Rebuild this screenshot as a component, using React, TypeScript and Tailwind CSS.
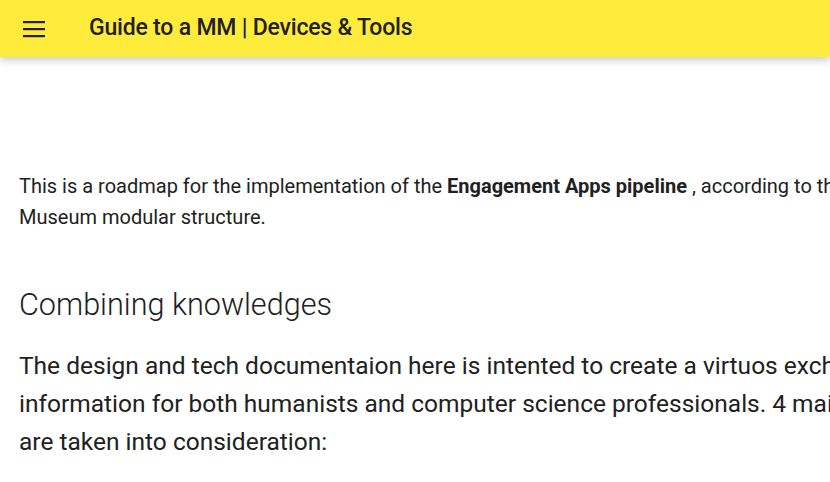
import React from "react";

function MenuIcon() {
  return (
    <svg width="24" height="18" viewBox="0 0 24 18" className="text-[#212121]">
      <rect x="1" y="1" width="22" height="2.2" fill="currentColor" />
      <rect x="1" y="8" width="22" height="2.2" fill="currentColor" />
      <rect x="1" y="15" width="22" height="2.2" fill="currentColor" />
    </svg>
  );
}

export default function App() {
  return (
    <div className="w-[830px] h-[482px] overflow-hidden bg-white font-['Roboto',sans-serif] text-[#212121]">
      {/* top bar */}
      <header className="relative z-10 h-[57px] bg-[#ffeb3b] flex items-center shadow-[0_3px_8px_rgba(0,0,0,0.22)]">
        <button className="ml-[22px] w-[24px] flex items-center justify-center">
          <MenuIcon />
        </button>
        <h1 className="ml-[43px] -mt-[1px] text-[23px] font-medium tracking-[-0.2px] whitespace-nowrap">
          Guide to a MM | Devices &amp; Tools
        </h1>
      </header>

      <main className="px-[19px] pt-[114px] whitespace-nowrap">
        <p className="text-[20px] leading-[31px]">
          This is a roadmap for the implementation of the <strong className="font-bold">Engagement Apps pipeline</strong> , according to the Meta
          <br />
          Museum modular structure.
        </p>

        <h2 className="mt-[52px] text-[30.6px] font-light leading-[40px]">Combining knowledges</h2>

        <p className="mt-[22px] text-[24.5px] leading-[38px]">
          The design and tech documentaion here is intented to create a virtuos exchange of
          <br />
          information for both humanists and computer science professionals. 4 main areas
          <br />
          are taken into consideration:
        </p>
      </main>
    </div>
  );
}
